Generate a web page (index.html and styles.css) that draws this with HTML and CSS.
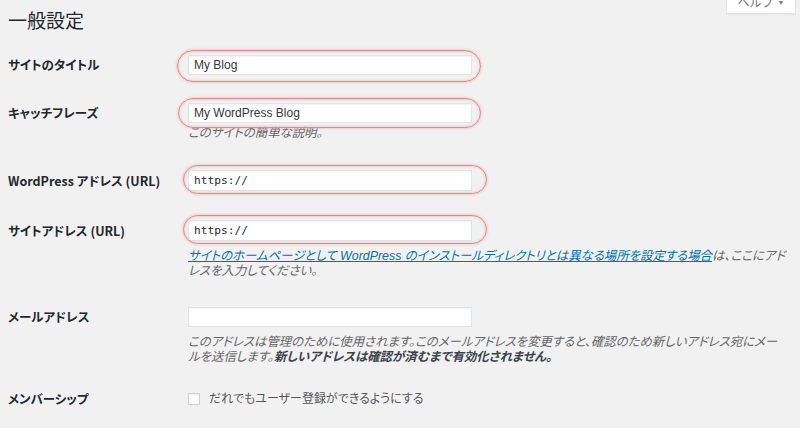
FILE: index.html
```html
<!DOCTYPE html>
<html lang="ja">
<head>
<meta charset="utf-8">
<title>一般設定</title>
<link rel="stylesheet" href="styles.css">
</head>
<body>
<div class="wrap">
  <div class="head">
    <h1 class="title">一般設定</h1>
    <button class="help" type="button">ヘルプ <span class="caret">▼</span></button>
  </div>
  <div class="form">
    <div class="row row-1">
      <div class="label">サイトのタイトル</div>
      <div class="field">
        <span class="ring ring-a"><span class="input">My Blog</span></span>
      </div>
    </div>
    <div class="row row-2">
      <div class="label">キャッチフレーズ</div>
      <div class="field">
        <span class="ring ring-b"><span class="input">My WordPress Blog</span></span>
        <p class="desc desc-tight">このサイトの簡単な説明。</p>
      </div>
    </div>
    <div class="row row-3 row-url">
      <div class="label">WordPress アドレス (URL)</div>
      <div class="field">
        <span class="ring ring-c"><span class="input input-url">https://</span></span>
      </div>
    </div>
    <div class="row row-4 row-url">
      <div class="label">サイトアドレス (URL)</div>
      <div class="field">
        <span class="ring ring-c"><span class="input input-url">https://</span></span>
        <p class="desc"><a class="link" href="#">サイトのホームページとして WordPress のインストールディレクトリとは異なる場所を設定する場合</a>は、ここにアドレスを入力してください。</p>
      </div>
    </div>
    <div class="row row-5">
      <div class="label">メールアドレス</div>
      <div class="field">
        <span class="input"></span>
        <p class="desc">このアドレスは管理のために使用されます。このメールアドレスを変更すると、確認のため新しいアドレス宛にメールを送信します。<strong class="strong">新しいアドレスは確認が済むまで有効化されません。</strong></p>
      </div>
    </div>
    <div class="row row-6">
      <div class="label">メンバーシップ</div>
      <div class="field check-field">
        <span class="checkbox"></span>
        <span class="check-label">だれでもユーザー登録ができるようにする</span>
      </div>
    </div>
  </div>
</div>
</body>
</html>
```
FILE: styles.css
```css
html, body {
  margin: 0;
  padding: 0;
  background: #f1f1f1;
}
body {
  font-family: "Liberation Sans", "Noto Sans CJK JP", sans-serif;
  color: #23282d;
  font-feature-settings: "palt";
}
.wrap {
  padding: 0 4px 0 8px;
}
.head {
  display: flex;
  justify-content: space-between;
  align-items: flex-start;
}
.title {
  margin: 5px 0 0;
  font-family: "Noto Sans CJK JP", sans-serif;
  font-size: 19px;
  font-weight: 400;
  line-height: 30px;
  color: #23282d;
  font-feature-settings: normal;
}
.help {
  margin-top: -8px;
  width: 70px;
  height: 22px;
  padding: 0 0 2px;
  display: flex;
  align-items: flex-end;
  justify-content: center;
  gap: 4px;
  background: #fff;
  border: 1px solid #e2e4e7;
  box-shadow: 0 1px 1px rgba(0,0,0,.04);
  font-family: inherit;
  font-size: 12px;
  line-height: 16px;
  color: #72777c;
}
.caret {
  font-size: 7px;
  line-height: 16px;
}
.form {
  display: flex;
  flex-direction: column;
}
.row {
  display: grid;
  grid-template-columns: 180px 1fr;
  align-items: start;
}
.row-1 { margin-top: 20px; }
.row-2 { margin-top: 28px; }
.row-3 { margin-top: 29px; }
.row-4 { margin-top: 29px; }
.row-5 { margin-top: 28px; }
.row-6 { margin-top: 24px; }
.label {
  font-family: "Noto Sans CJK JP", sans-serif;
  font-size: 12.5px;
  font-weight: 700;
  line-height: 20px;
  color: #23282d;
}
.row-url .label { line-height: 21px; }
.field {
  min-width: 0;
}
.input {
  display: flex;
  align-items: center;
  box-sizing: border-box;
  width: 284px;
  height: 20px;
  padding: 0 5px;
  background: #fff;
  border: 1px solid #e3e3e3;
  border-right-color: #dbe9ee;
  box-shadow: inset 0 1px 2px rgba(0,0,0,.06);
  font-size: 12px;
  color: #32373c;
}
.input-url {
  height: 21px;
  font-family: "DejaVu Sans Mono", monospace;
  font-size: 11.2px;
  color: #23282d;
}
.ring {
  position: relative;
  display: block;
  width: 284px;
}
.ring::after {
  content: "";
  position: absolute;
  border: 1.5px solid #de8a88;
  border-radius: 18px;
  box-shadow: 0 0 2px 1px rgba(240,170,170,.45), inset 0 0 2px 1px rgba(240,170,170,.45);
  pointer-events: none;
}
.ring-a::after { top: -5px; right: -9px; bottom: -7px; left: -11px; }
.ring-b::after { top: -5px; right: -9px; bottom: -5px; left: -10px; }
.ring-c::after { top: -5px; right: -15px; bottom: -3px; left: -5px; }
.desc {
  margin: 8px 0 0;
  width: 599px;
  font-size: 12.4px;
  line-height: 15px;
  font-style: italic;
  color: #666;
}
.desc-tight { margin-top: 3px; }
.link {
  color: #0073aa;
  text-decoration: underline;
}
.strong {
  font-weight: 700;
  color: #3c434a;
}
.check-field {
  display: flex;
  align-items: center;
  gap: 9px;
  height: 20px;
}
.checkbox {
  box-sizing: border-box;
  width: 12px;
  height: 12px;
  background: #fff;
  border: 1px solid #cfd2d5;
  box-shadow: inset 0 1px 2px rgba(0,0,0,.08);
}
.check-label {
  font-size: 12px;
  line-height: 20px;
  color: #555;
}
```
